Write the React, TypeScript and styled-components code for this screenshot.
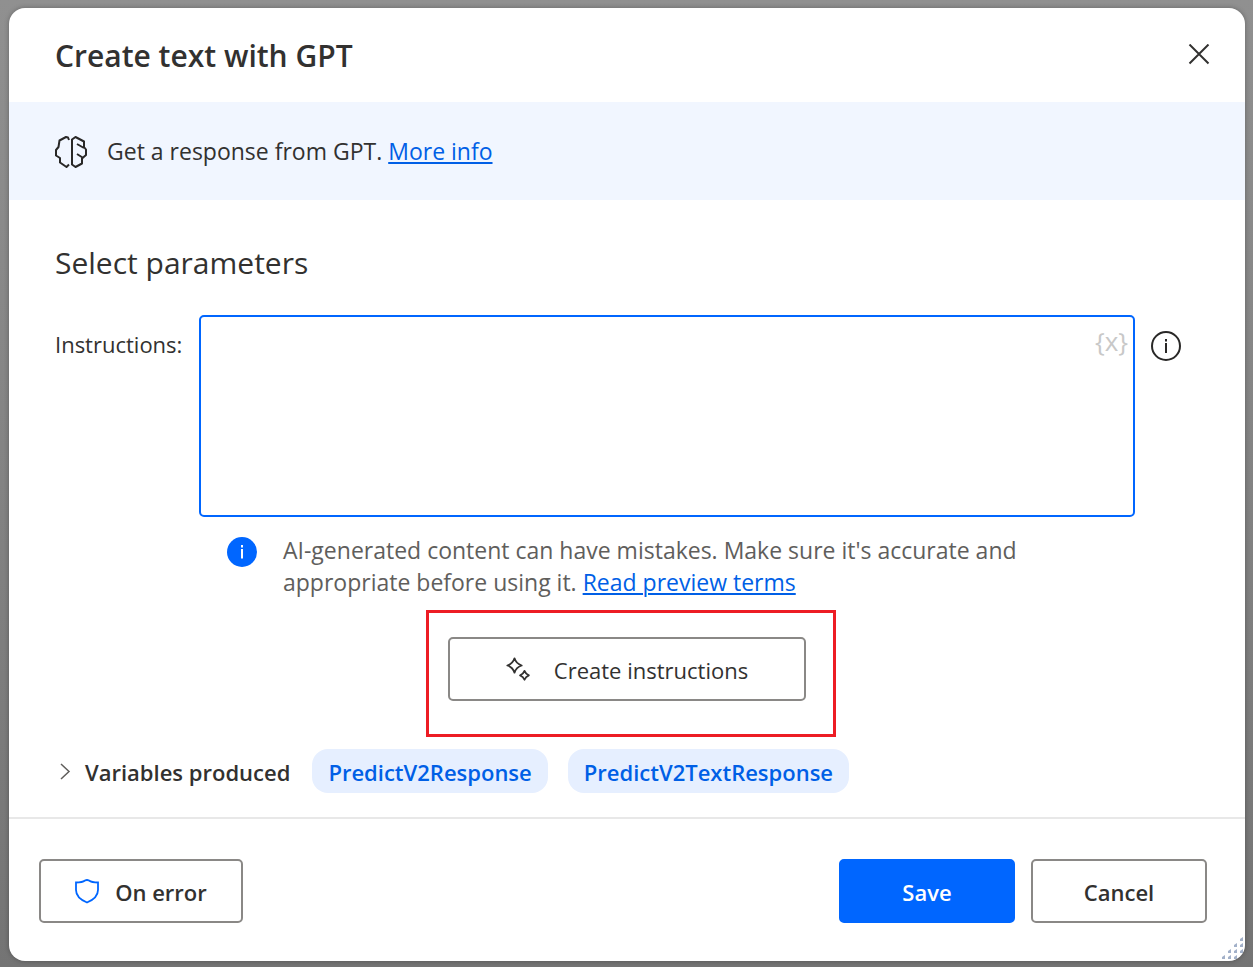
import React from 'react';
import styled, { createGlobalStyle } from 'styled-components';

const GlobalStyle = createGlobalStyle`
  *, *::before, *::after { box-sizing: border-box; }
  body {
    margin: 0;
    background: #8a8a8a;
    color: #323130;
    font-family: 'Segoe UI', 'Open Sans', 'Noto Sans', sans-serif;
    font-size: 23px;
    line-height: 32px;
  }
  button, textarea { font: inherit; color: inherit; }
`;

const Backdrop = styled.div`
  min-height: 100vh;
  padding: 8px 8px 6px 9px;
  display: flex;
  background: linear-gradient(#909090, #838383 50%, #747474);
`;

const Dialog = styled.main`
  position: relative;
  flex: 1;
  min-width: 0;
  display: flex;
  flex-direction: column;
  background: #fff;
  border-radius: 16px;
  box-shadow: 0 0 5px rgba(0, 0, 0, 0.3);
  overflow: hidden;
`;

const Header = styled.header`
  height: 94px;
  padding: 2px 30px 0 46px;
  display: flex;
  align-items: center;
  justify-content: space-between;
`;

const Title = styled.h1`
  margin: 0;
  font-size: 30px;
  line-height: 40px;
  font-weight: 600;
`;

const IconButton = styled.button`
  display: flex;
  padding: 4px;
  border: 0;
  background: none;
`;

const Banner = styled.div`
  height: 98px;
  padding: 0 46px;
  display: flex;
  align-items: center;
  gap: 20px;
  background: #f1f6ff;
`;

const Paragraph = styled.p`
  margin: 0;
`;

const Link = styled.a`
  color: #005fe6;
  text-decoration: underline;
  text-decoration-thickness: 2px;
  text-underline-offset: 2px;
`;

const Body = styled.div`
  padding: 43px 46px 24px;
`;

const SectionTitle = styled.h2`
  margin: 0;
  font-size: 30px;
  line-height: 40px;
  font-weight: 400;
`;

const Field = styled.div`
  margin-top: 32px;
  padding-right: 18px;
  display: grid;
  grid-template-columns: 128px 1fr 30px;
  column-gap: 16px;
`;

const FieldLabel = styled.label`
  padding-top: 13px;
  font-size: 22px;
  white-space: nowrap;
`;

const InputWrap = styled.div`
  position: relative;
  display: flex;
`;

const TextArea = styled.textarea`
  flex: 1;
  min-width: 0;
  height: 202px;
  padding: 10px 48px 10px 12px;
  border: 2px solid #0066ff;
  border-radius: 5px;
  background: #fff;
  outline: 0;
  resize: none;
`;

const VariableButton = styled.button`
  position: absolute;
  top: 10px;
  right: 7px;
  padding: 0;
  border: 0;
  background: none;
  color: #c8c8c8;
  font-size: 26px;
`;

const InfoButton = styled.button`
  align-self: start;
  display: flex;
  margin-top: 16px;
  padding: 0;
  border: 0;
  background: none;
`;

const Notice = styled.div`
  margin: 17px 120px 0 172px;
  display: flex;
  align-items: flex-start;
  gap: 26px;
  color: #605e5c;
`;

const NoticeIcon = styled.svg`
  flex: none;
  margin-top: 3px;
`;

const NoticeText = styled.p`
  margin: 0;
  max-width: 744px;
`;

const Highlight = styled.div`
  position: relative;
  width: fit-content;
  margin: 39px auto 48px;

  &::after {
    content: '';
    position: absolute;
    inset: -27px -30px -36px -22px;
    border: 3px solid #ed1c24;
    pointer-events: none;
  }
`;

const Button = styled.button<{ $primary?: boolean; $width: number; $weight?: number; $gap?: number }>`
  width: ${(p) => p.$width}px;
  height: 64px;
  padding: 2px 0 0;
  display: flex;
  align-items: center;
  justify-content: center;
  gap: ${(p) => p.$gap ?? 16}px;
  border: 2px solid ${(p) => (p.$primary ? '#0066ff' : '#8a8886')};
  border-radius: 5px;
  background: ${(p) => (p.$primary ? '#0066ff' : '#fff')};
  color: ${(p) => (p.$primary ? '#fff' : '#323130')};
  font-size: 22px;
  font-weight: ${(p) => p.$weight ?? 600};

  svg {
    flex: none;
    margin-bottom: 2px;
  }
`;

const Variables = styled.div`
  display: flex;
  align-items: center;
  gap: 20px;
  font-size: 22px;
`;

const Disclosure = styled.button`
  display: flex;
  align-items: center;
  gap: 12px;
  padding: 1px 2px 0 4px;
  border: 0;
  background: none;
  font-weight: 600;
  white-space: nowrap;
`;

const Chip = styled.span`
  height: 44px;
  padding: 7px 16px 5px;
  border-radius: 16px;
  background: #e6efff;
  color: #005fe6;
  font-weight: 600;
`;

const Footer = styled.footer`
  padding: 40px 38px 38px 30px;
  display: flex;
  gap: 16px;
  border-top: 2px solid #e8e8e8;
`;

const Spacer = styled.div`
  flex: 1;
`;

const ResizeGrip = styled.svg`
  position: absolute;
  right: 0;
  bottom: 0;
`;

const gripDots = [
  [19, 0],
  [13, 6], [19, 6],
  [7, 12], [13, 12], [19, 12],
  [1, 18], [7, 18], [13, 18],
];

export default function App() {
  return (
    <Backdrop>
      <GlobalStyle />
      <Dialog>
        <Header>
          <Title>Create text with GPT</Title>
          <IconButton aria-label="Close">
            <svg width="24" height="24" viewBox="0 0 24 24" fill="none" stroke="#323130" strokeWidth="2">
              <path d="M2.500 0.500 21.500 19.500M21.500 0.500 2.500 19.500" />
            </svg>
          </IconButton>
        </Header>

        <Banner>
          <svg width="32" height="34" viewBox="0 -2 32 34" fill="none" stroke="#292827" strokeWidth="2" strokeLinejoin="round">
            <path d="M14 4 13 1.500 11 1 4.500 4.500 3.500 11 1 14V19.500L5 22V26.500L11.500 31 14 28.500" />
            <path d="M17 3.500V28.500L20.500 31 27 27.500V22.500L31 19V13.500L29 11V5.500L20.500 1Z" />
            <path d="M22 8 29 12M22 18 27.500 21.500" />
          </svg>
          <Paragraph>
            Get a response from GPT. <Link href="#">More info</Link>
          </Paragraph>
        </Banner>

        <Body>
          <SectionTitle>Select parameters</SectionTitle>
          <Field>
            <FieldLabel htmlFor="instructions">Instructions:</FieldLabel>
            <InputWrap>
              <TextArea id="instructions" />
              <VariableButton aria-label="Select variable">{'{x}'}</VariableButton>
            </InputWrap>
            <InfoButton aria-label="About instructions">
              <svg width="30" height="30" viewBox="0 0 30 30" fill="none" stroke="#292827" strokeWidth="2">
                <circle cx="15" cy="15" r="14" />
                <path d="M15 12V22M15 8V10.500" />
              </svg>
            </InfoButton>
          </Field>

          <Notice>
            <NoticeIcon width="30" height="30" viewBox="0 0 30 30">
              <circle cx="15" cy="15" r="15" fill="#0066ff" />
              <path d="M15 12V21.500M15 8V10.500" stroke="#fff" strokeWidth="2" />
            </NoticeIcon>
            <NoticeText>
              AI-generated content can have mistakes. Make sure it's accurate and appropriate before using it.{' '}
              <Link href="#">Read preview terms</Link>
            </NoticeText>
          </Notice>

          <Highlight>
            <Button $width={358} $weight={400} $gap={24}>
              <svg width="24" height="24" viewBox="0 0 24 24" fill="none" stroke="#323130" strokeWidth="1.800" strokeLinejoin="round">
                <path d="M8.500 1.300Q10.200 6.800 15.700 8.500 10.200 10.200 8.500 15.700 6.800 10.200 1.300 8.500 6.800 6.800 8.500 1.300Z" />
                <path d="M18.500 13.900Q19.700 17.100 22.900 18.300 19.700 19.500 18.500 22.700 17.300 19.500 14.100 18.300 17.300 17.100 18.500 13.900Z" />
              </svg>
              Create instructions
            </Button>
          </Highlight>

          <Variables>
            <Disclosure aria-expanded="false">
              <svg width="14" height="20" viewBox="0 0 14 20" fill="none" stroke="#605e5c" strokeWidth="1.500">
                <path d="M2 2 10 9.500 2 17" />
              </svg>
              Variables produced
            </Disclosure>
            <Chip>PredictV2Response</Chip>
            <Chip>PredictV2TextResponse</Chip>
          </Variables>
        </Body>

        <Footer>
          <Button $width={204}>
            <svg width="24" height="26" viewBox="0 0 24 26" fill="none" stroke="#0066ff" strokeWidth="1.800">
              <path d="M1 4.500C5 4.500 8 4 10 2.500Q12 1.500 14 2.500C16 4 19 4.500 23 4.500V12C23 17.500 18 22 12 24.500 6 22 1 17.500 1 12Z" />
            </svg>
            On error
          </Button>
          <Spacer />
          <Button $width={176} $primary>Save</Button>
          <Button $width={176}>Cancel</Button>
        </Footer>

        <ResizeGrip width="24" height="24" viewBox="0 0 24 24">
          {gripDots.map(([x, y]) => (
            <path key={`${x}-${y}`} d={`M${x + 3} ${y}V${y + 4}H${x}V${y + 2}Z`} fill="#a3b1c9" />
          ))}
        </ResizeGrip>
      </Dialog>
    </Backdrop>
  );
}
